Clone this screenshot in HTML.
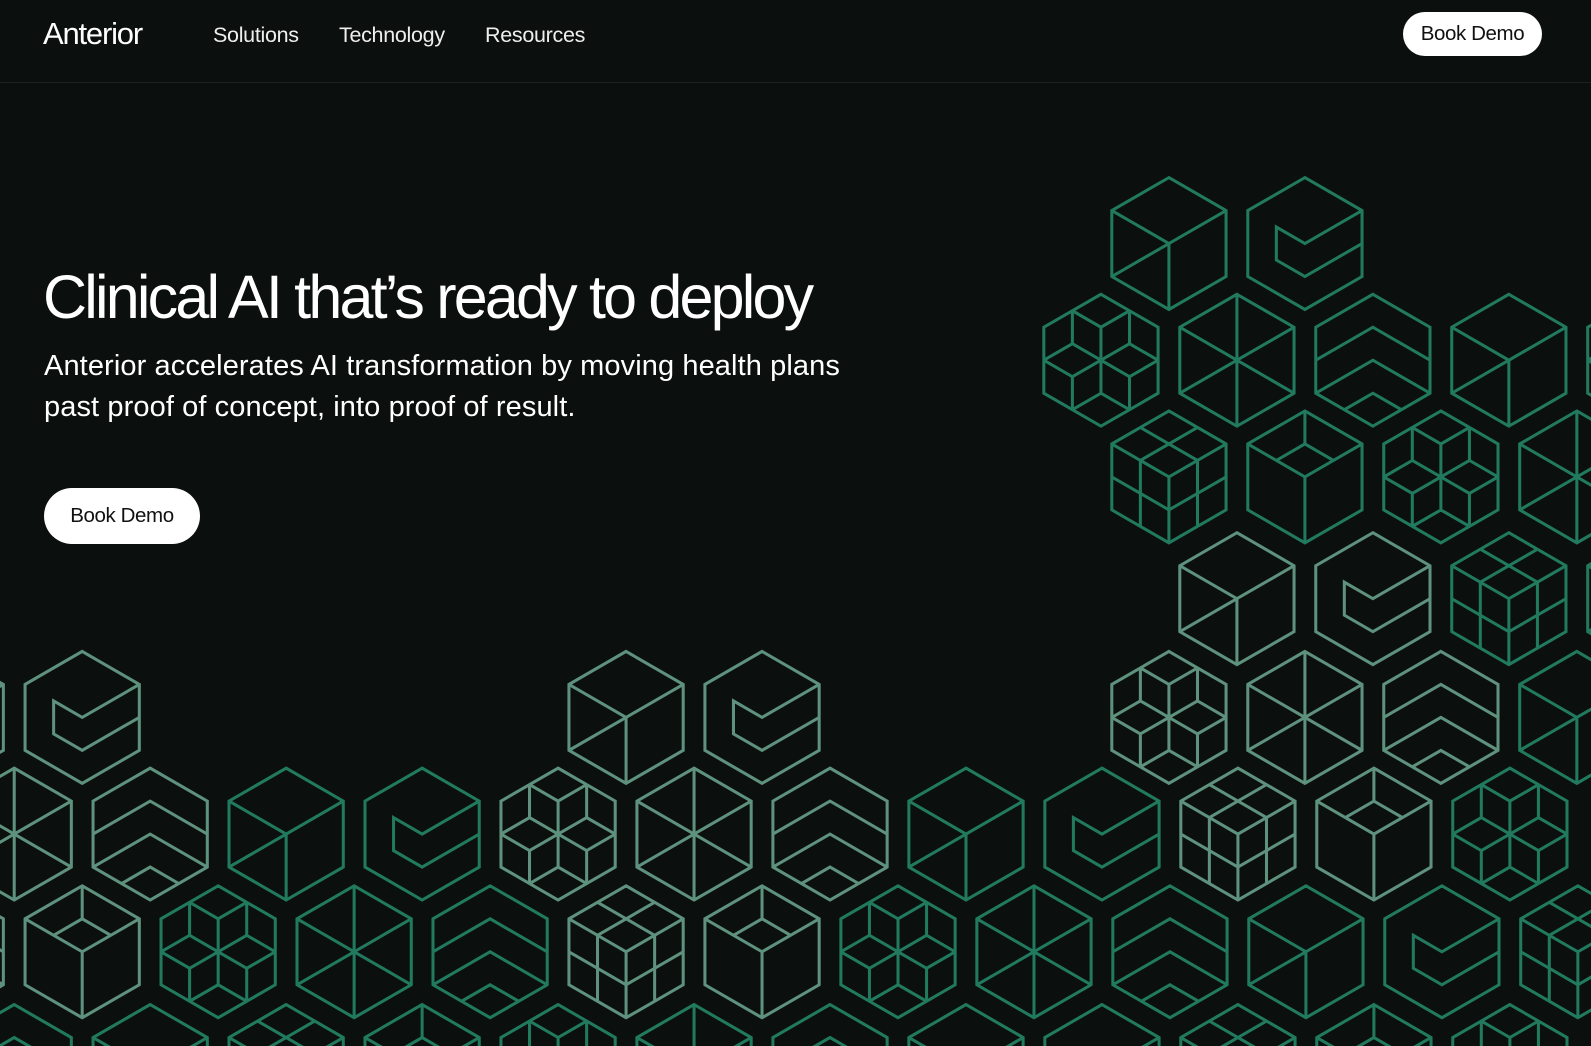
<!DOCTYPE html>
<html><head><meta charset="utf-8">
<style>
*{margin:0;padding:0;box-sizing:border-box}
html,body{width:1591px;height:1046px;overflow:hidden;background:#0b0f0e;font-family:"Liberation Sans",sans-serif;color:#fff}
.hdr{position:absolute;left:0;top:0;width:1591px;height:83px;border-bottom:1px solid #1d2221}
.logo{position:absolute;left:43px;top:16px;font-size:31px;letter-spacing:-1.2px}
.nav{position:absolute;top:23px;font-size:21.5px;letter-spacing:-0.3px;color:#eee}
.btn{position:absolute;background:#fff;color:#111;border-radius:30px;text-align:center;font-size:20.5px;letter-spacing:-0.4px}
h1{position:absolute;left:43px;top:262px;font-weight:400;font-size:61px;letter-spacing:-2.8px;white-space:nowrap}
.sub{position:absolute;left:44px;top:346px;font-size:29px;line-height:40.5px;letter-spacing:0.1px;width:810px}
svg{position:absolute;left:0;top:0}
</style></head><body>
<svg width="1591" height="1046" viewBox="0 0 1591 1046" fill="none" stroke-width="3" stroke-linejoin="miter">
<defs>
<path id="hx" d="M0,-65 L56.3,-32.5 L56.3,32.5 L0,65 L-56.3,32.5 L-56.3,-32.5Z"/>
<g id="cube"><use href="#hx"/><path d="M-56.3,-32.5 L0,0 L56.3,-32.5 M0,0 V65 M-56.3,32.5 L0,0"/></g>
<g id="check"><use href="#hx"/><path d="M56.3,-32.5 L0,0 L-28.15,-16.25 V16.25 L0,32.5 L56.3,0"/></g>
<g id="flower"><use href="#hx"/><path d="M0,0 L0,-32.5 M0,0 L28.15,-16.25 M0,0 L28.15,16.25 M0,0 L0,32.5 M0,0 L-28.15,16.25 M0,0 L-28.15,-16.25 M-28.15,-48.75 L0,-32.5 L28.15,-48.75 M28.15,-48.75 L28.15,-16.25 L56.3,0 M56.3,0 L28.15,16.25 L28.15,48.75 M28.15,48.75 L0,32.5 L-28.15,48.75 M-28.15,48.75 L-28.15,16.25 L-56.3,0 M-56.3,0 L-28.15,-16.25 L-28.15,-48.75"/></g>
<g id="ast"><use href="#hx"/><path d="M0,-65V65 M-56.3,-32.5L56.3,32.5 M56.3,-32.5L-56.3,32.5"/></g>
<g id="chev"><use href="#hx"/><path d="M-56.3,0 L0,-32.5 L56.3,0 M-56.3,32.5 L0,0 L56.3,32.5 M-28.15,48.75 L0,32.5 L28.15,48.75"/></g>
<g id="rubik"><use href="#hx"/><path d="M-56.3,-32.5 L0,0 L56.3,-32.5 M0,0 V65 M-28.15,-48.75 L28.15,-16.25 M28.15,-48.75 L-28.15,-16.25 M-28.15,-16.25 V48.75 M-56.3,0 L0,32.5 M28.15,-16.25 V48.75 M56.3,0 L0,32.5"/></g>
<g id="box"><use href="#hx"/><path d="M-56.3,-32.5 L0,0 L56.3,-32.5 M0,0V65 M0,-65V-32.5 M-28.15,-16.25 L0,-32.5 L28.15,-16.25"/></g>
</defs>
<g transform="scale(1.0147)">
<g stroke="#217a5d">
<use href="#cube" x="1152" y="240"/><use href="#check" x="1286" y="240"/>
<use href="#flower" x="1085" y="355"/><use href="#ast" x="1219" y="355"/><use href="#chev" x="1353" y="355"/><use href="#cube" x="1487" y="355"/><use href="#flower" x="1621" y="355"/>
<use href="#rubik" x="1152" y="470"/><use href="#box" x="1286" y="470"/><use href="#flower" x="1420" y="470"/><use href="#ast" x="1554" y="470"/>
<use href="#rubik" x="1487" y="590"/><use href="#cube" x="1621" y="590"/>
<use href="#cube" x="1554" y="707"/>
<use href="#cube" x="282" y="822"/><use href="#check" x="416" y="822"/><use href="#cube" x="952" y="822"/><use href="#check" x="1086" y="822"/><use href="#flower" x="1488" y="822"/>
<use href="#flower" x="215" y="938"/><use href="#ast" x="349" y="938"/><use href="#chev" x="483" y="938"/><use href="#flower" x="885" y="938"/><use href="#ast" x="1019" y="938"/><use href="#chev" x="1153" y="938"/><use href="#cube" x="1287" y="938"/><use href="#check" x="1421" y="938"/><use href="#rubik" x="1555" y="938"/>
<use href="#chev" x="14" y="1055"/><use href="#cube" x="148" y="1055"/><use href="#rubik" x="282" y="1055"/><use href="#box" x="416" y="1055"/><use href="#flower" x="550" y="1055"/><use href="#ast" x="684" y="1055"/><use href="#chev" x="818" y="1055"/><use href="#cube" x="952" y="1055"/><use href="#check" x="1086" y="1055"/><use href="#rubik" x="1220" y="1055"/><use href="#box" x="1354" y="1055"/><use href="#flower" x="1488" y="1055"/>
</g>
<g stroke="#5e917e">
<use href="#cube" x="1219" y="590"/><use href="#check" x="1353" y="590"/>
<use href="#cube" x="-53" y="707"/><use href="#check" x="81" y="707"/><use href="#cube" x="617" y="707"/><use href="#check" x="751" y="707"/><use href="#flower" x="1152" y="707"/><use href="#ast" x="1286" y="707"/><use href="#chev" x="1420" y="707"/>
<use href="#ast" x="14" y="822"/><use href="#chev" x="148" y="822"/><use href="#flower" x="550" y="822"/><use href="#ast" x="684" y="822"/><use href="#chev" x="818" y="822"/><use href="#rubik" x="1220" y="822"/><use href="#box" x="1354" y="822"/>
<use href="#chev" x="-53" y="938"/><use href="#box" x="81" y="938"/><use href="#rubik" x="617" y="938"/><use href="#box" x="751" y="938"/>
</g>
</g>
</svg>
<div class="hdr"></div>
<div class="logo">Anterior</div>
<div class="nav" style="left:213px">Solutions</div>
<div class="nav" style="left:339px">Technology</div>
<div class="nav" style="left:485px">Resources</div>
<div class="btn" style="left:1403px;top:12px;width:139px;height:44px;line-height:44px">Book Demo</div>
<h1>Clinical AI that’s ready to deploy</h1>
<div class="sub">Anterior accelerates AI transformation by moving health plans past proof of concept, into proof of result.</div>
<div class="btn" style="left:44px;top:488px;width:156px;height:56px;line-height:56px">Book Demo</div>
</body></html>
